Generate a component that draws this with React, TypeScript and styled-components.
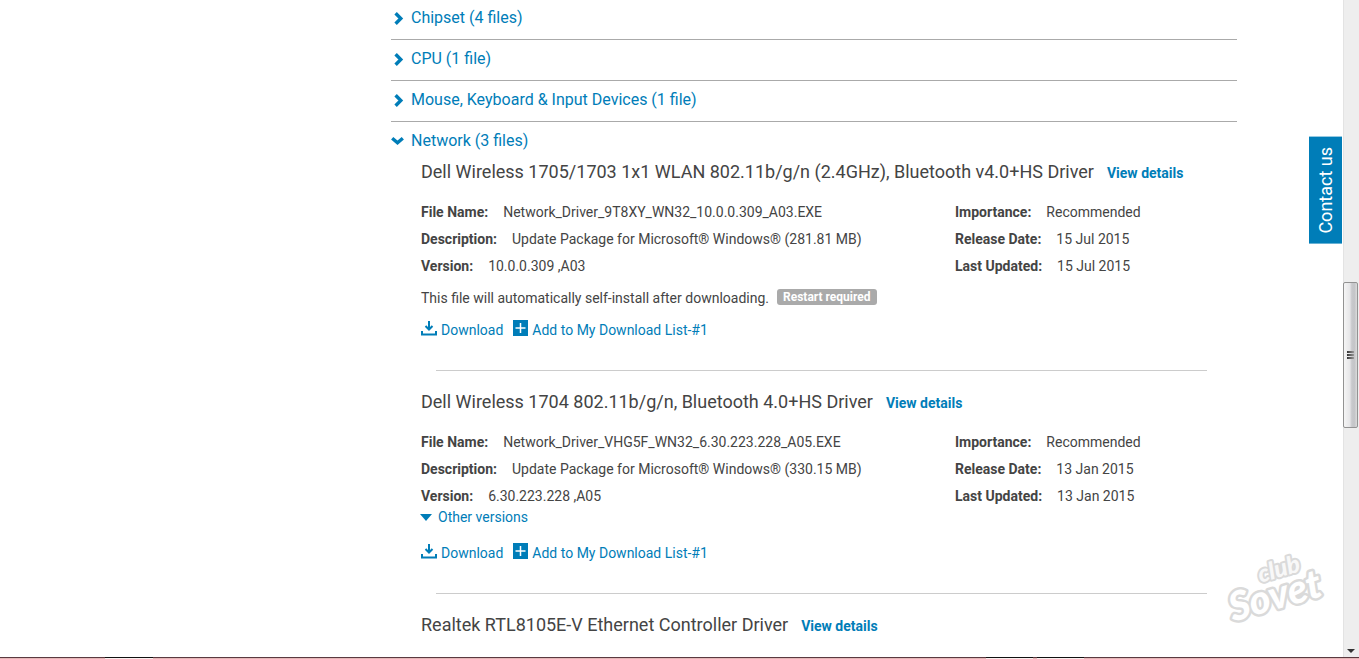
import React from "react";
import styled, { createGlobalStyle } from "styled-components";

const BLUE = "#007db8";
const TEXT = "#444444";

const GlobalStyle = createGlobalStyle`
  * { box-sizing: border-box; }
  body {
    margin: 0;
    background: #ffffff;
    color: ${TEXT};
    font-family: Roboto, "Liberation Sans", sans-serif;
    font-size: 14px;
    overflow: hidden;
  }
  a { color: ${BLUE}; text-decoration: none; }
`;

const Screen = styled.div`
  display: flex;
  flex-direction: column;
  height: 100vh;
`;

const Viewport = styled.div`
  display: flex;
  flex: 1;
  min-height: 0;
`;

const Page = styled.div`
  position: relative;
  flex: 1;
  min-width: 0;
  overflow: hidden;
`;

const Main = styled.main`
  margin: -1px 106px 0 391px;
`;

const Category = styled.section`
  border-bottom: 1px solid #aaaaaa;
  &:last-child { border-bottom: 0; }
`;

const CategoryToggle = styled.button<{ $open?: boolean }>`
  display: flex;
  align-items: center;
  gap: 6px;
  width: 100%;
  height: ${(p) => (p.$open ? 38 : 40)}px;
  padding: 0 0 ${(p) => (p.$open ? 0 : 2)}px;
  border: 0;
  background: none;
  color: ${BLUE};
  font: 16px/24px Roboto, "Liberation Sans", sans-serif;
  text-align: left;
  cursor: pointer;
`;

const DriverList = styled.div`
  padding: 0 15px 0 30px;
`;

const Driver = styled.article`
  & + & {
    padding-top: 19px;
  }
`;

const Title = styled.h2`
  display: flex;
  align-items: baseline;
  gap: 13px;
  margin: 0 0 14px;
  font-size: 18px;
  font-weight: 400;
  line-height: 24px;
  white-space: nowrap;
`;

const DetailsLink = styled.a`
  font-size: 14px;
  font-weight: 700;
`;

const Facts = styled.div`
  display: grid;
  grid-template-columns: 2fr 1fr;
`;

const FactList = styled.dl`
  margin: 0;
`;

const Fact = styled.div`
  display: flex;
  gap: 15px;
  line-height: 27px;
  white-space: nowrap;
`;

const Term = styled.dt`
  font-weight: 700;
`;

const Value = styled.dd`
  margin: 0;
`;

const Note = styled.p`
  display: flex;
  align-items: center;
  gap: 8px;
  margin: 6px 0 0;
  line-height: 24px;
`;

const Badge = styled.span`
  margin-bottom: 2px;
  padding: 0 7px 0 6px;
  border-radius: 3px;
  background: #aaaaaa;
  color: #ffffff;
  font-size: 12px;
  font-weight: 700;
  line-height: 16px;
`;

const VersionsToggle = styled.button`
  display: flex;
  align-items: center;
  gap: 6px;
  margin: -1px 0 16px -1px;
  padding: 0;
  border: 0;
  background: none;
  color: ${BLUE};
  font: 14px/16px Roboto, "Liberation Sans", sans-serif;
  cursor: pointer;
`;

const Actions = styled.div`
  display: flex;
  gap: 10px;
  margin-top: 8px;
  line-height: 24px;
`;

const Action = styled.a`
  display: flex;
  align-items: center;
  gap: 4px;
  svg { margin-bottom: 5px; }
`;

const Divider = styled.hr`
  height: 1px;
  margin: 28px 15px 0;
  border: 0;
  background: #cccccc;
`;

const ContactTab = styled.button`
  position: absolute;
  top: 137px;
  right: 1px;
  padding: 10px 6px;
  border: 0;
  background: ${BLUE};
  color: #ffffff;
  font: 18px/21px Roboto, "Liberation Sans", sans-serif;
  writing-mode: vertical-rl;
  transform: rotate(180deg);
  cursor: pointer;
`;

const Watermark = styled.svg`
  position: absolute;
  right: 3px;
  bottom: 17px;
`;

const ScrollTrack = styled.div`
  display: flex;
  flex-direction: column;
  align-items: flex-start;
  width: 16px;
  padding: 282px 0 4px;
  background: linear-gradient(90deg, #e3e3e3 1px, #eeeeee 1px);
`;

const ScrollThumb = styled.div`
  display: flex;
  flex-direction: column;
  align-items: center;
  justify-content: center;
  gap: 1px;
  width: 15px;
  height: 146px;
  border: 1px solid #929292;
  border-radius: 2px;
  background: linear-gradient(90deg, #f5f5f5, #e6e6e8 45%, #c8c9cc 60%, #c4c5c8 80%, #dcdcdc);
`;

const Grip = styled.span`
  width: 7px;
  height: 2px;
  background: linear-gradient(90deg, #333333, #999999);
`;

const ScrollArrow = styled.svg`
  margin: auto 0 0 4px;
`;

const TaskbarEdge = styled.div`
  display: flex;
  height: 2px;
  border-top: 1px solid #5b3a40;
  background: #e4b6b6;
`;

const TaskbarWindow = styled.span<{ $start: number; $width: number }>`
  width: ${(p) => p.$width}px;
  height: 2px;
  margin: -1px 0 0 ${(p) => p.$start}px;
  border-top: 1px solid #111111;
  background: #fbeeee;
`;

function Chevron({ open }: { open?: boolean }) {
  return (
    <svg width="14" height="14" viewBox="0 0 14 14" aria-hidden="true">
      <path
        d={open ? "M1.2 4.2 6.5 8.8l5.3-4.6" : "M4.6 2.2l5.2 5.3-5.2 5.3"}
        fill="none"
        stroke={BLUE}
        strokeWidth="3.4"
      />
    </svg>
  );
}

function DownloadIcon() {
  return (
    <svg width="16" height="16" viewBox="0 0 16 16" fill="none" stroke={BLUE} strokeWidth="2" aria-hidden="true">
      <path d="M8 1v8M4.5 6 8 9.5 11.5 6M1 11v3.5h14V11" />
    </svg>
  );
}

function AddIcon() {
  return (
    <svg width="15" height="16" viewBox="0 0 15 16" aria-hidden="true">
      <path d="M0 0h15v16H0z" fill={BLUE} />
      <path d="M7.5 3v10M2.5 8h10" stroke="#ffffff" strokeWidth="1.5" />
    </svg>
  );
}

interface DriverInfo {
  name: string;
  facts?: [string, string][];
  release?: [string, string][];
  note?: string;
  badge?: string;
  otherVersions?: boolean;
}

const categories = ["Chipset (4 files)", "CPU (1 file)", "Mouse, Keyboard & Input Devices (1 file)"];

const drivers: DriverInfo[] = [
  {
    name: "Dell Wireless 1705/1703 1x1 WLAN 802.11b/g/n (2.4GHz), Bluetooth v4.0+HS Driver",
    facts: [
      ["File Name:", "Network_Driver_9T8XY_WN32_10.0.0.309_A03.EXE"],
      ["Description:", "Update Package for Microsoft® Windows® (281.81 MB)"],
      ["Version:", "10.0.0.309 ,A03"],
    ],
    release: [
      ["Importance:", "Recommended"],
      ["Release Date:", "15 Jul 2015"],
      ["Last Updated:", "15 Jul 2015"],
    ],
    note: "This file will automatically self-install after downloading.",
    badge: "Restart required",
  },
  {
    name: "Dell Wireless 1704 802.11b/g/n, Bluetooth 4.0+HS Driver",
    facts: [
      ["File Name:", "Network_Driver_VHG5F_WN32_6.30.223.228_A05.EXE"],
      ["Description:", "Update Package for Microsoft® Windows® (330.15 MB)"],
      ["Version:", "6.30.223.228 ,A05"],
    ],
    release: [
      ["Importance:", "Recommended"],
      ["Release Date:", "13 Jan 2015"],
      ["Last Updated:", "13 Jan 2015"],
    ],
    otherVersions: true,
  },
  { name: "Realtek RTL8105E-V Ethernet Controller Driver" },
];

function FactColumn({ items }: { items: [string, string][] }) {
  return (
    <FactList>
      {items.map(([term, value]) => (
        <Fact key={term}>
          <Term>{term}</Term>
          <Value>{value}</Value>
        </Fact>
      ))}
    </FactList>
  );
}

function DriverEntry({ driver }: { driver: DriverInfo }) {
  return (
    <Driver>
      <Title>
        {driver.name}
        <DetailsLink href="#details">View details</DetailsLink>
      </Title>
      {driver.facts && driver.release && (
        <>
          <Facts>
            <FactColumn items={driver.facts} />
            <FactColumn items={driver.release} />
          </Facts>
          {driver.note && (
            <Note>
              {driver.note}
              <Badge>{driver.badge}</Badge>
            </Note>
          )}
          {driver.otherVersions && (
            <VersionsToggle type="button">
              <svg width="12" height="7" viewBox="0 0 12 7" aria-hidden="true">
                <path d="M0 0h12L6 7z" fill={BLUE} />
              </svg>
              Other versions
            </VersionsToggle>
          )}
          <Actions>
            <Action href="#download">
              <DownloadIcon />
              Download
            </Action>
            <Action href="#list">
              <AddIcon />
              Add to My Download List-#1
            </Action>
          </Actions>
          <Divider />
        </>
      )}
    </Driver>
  );
}

export default function App() {
  return (
    <Screen>
      <GlobalStyle />
      <Viewport>
        <Page>
          <Main>
            {categories.map((label) => (
              <Category key={label}>
                <CategoryToggle type="button" aria-expanded="false">
                  <Chevron />
                  {label}
                </CategoryToggle>
              </Category>
            ))}
            <Category>
              <CategoryToggle type="button" aria-expanded="true" $open>
                <Chevron open />
                Network (3 files)
              </CategoryToggle>
              <DriverList>
                {drivers.map((driver) => (
                  <DriverEntry key={driver.name} driver={driver} />
                ))}
              </DriverList>
            </Category>
          </Main>
          <ContactTab type="button">Contact us</ContactTab>
          <Watermark width="130" height="100" viewBox="0 0 130 100" role="img" aria-label="club Sovet">
            <g
              transform="rotate(-16 65 50)"
              stroke="#dadada"
              strokeLinejoin="round"
              paintOrder="stroke"
              fontFamily="Lato, sans-serif"
              fontStyle="italic"
              fontWeight="900"
            >
              <text x="16" y="69" fontSize="40" strokeWidth="5" fill="#ffffff">Sovet</text>
              <text x="53" y="39" fontSize="24" strokeWidth="4" fill="#f8f8f8">club</text>
            </g>
          </Watermark>
        </Page>
        <ScrollTrack>
          <ScrollThumb>
            <Grip />
            <Grip />
            <Grip />
          </ScrollThumb>
          <ScrollArrow width="8" height="4" viewBox="0 0 8 4" aria-hidden="true">
            <path d="M0 0h8L4 4z" fill="#333333" />
          </ScrollArrow>
        </ScrollTrack>
      </Viewport>
      <TaskbarEdge>
        <TaskbarWindow $start={105} $width={48} />
        <TaskbarWindow $start={833} $width={47} />
        <TaskbarWindow $start={4} $width={47} />
      </TaskbarEdge>
    </Screen>
  );
}
